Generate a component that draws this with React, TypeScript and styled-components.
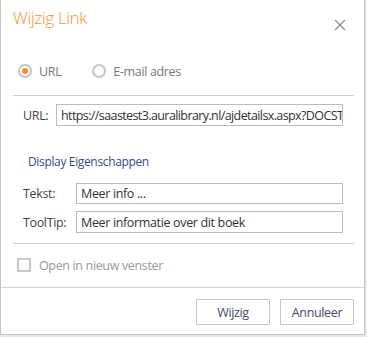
import styled, { createGlobalStyle } from 'styled-components';

const GlobalStyle = createGlobalStyle`
  html, body {
    margin: 0;
    padding: 0;
    background: #e8e8e8;
  }
  * {
    box-sizing: border-box;
  }
`;

const Dialog = styled.div`
  width: 365px;
  height: 335px;
  background: #fff;
  border: 1px solid #c4c4c4;
  border-top: none;
  display: flex;
  flex-direction: column;
  font-family: 'Open Sans', 'Noto Sans', sans-serif;
  font-size: 12px;
  letter-spacing: -0.35px;
  color: #444;
`;

const Header = styled.div`
  height: 56px;
  display: flex;
  justify-content: space-between;
  align-items: flex-start;
`;

const Title = styled.h1`
  margin: 7px 0 0 12px;
  font-size: 16.5px;
  font-weight: 300;
  line-height: 22px;
  letter-spacing: -0.2px;
  color: #f7901e;
`;

const Close = styled.button`
  margin: 19px 18px 0 0;
  padding: 0;
  width: 12px;
  height: 12px;
  border: none;
  background: transparent;
  display: flex;
`;

const Body = styled.div`
  padding: 0 10px 0 12px;
  display: flex;
  flex-direction: column;
`;

const RadioRow = styled.div`
  height: 30px;
  display: flex;
  align-items: center;
  padding-left: 5px;
  gap: 31px;
`;

const RadioLabel = styled.label`
  display: flex;
  align-items: center;
  gap: 7px;
  color: #777;
  font-size: 12.5px;
`;

const RadioDot = styled.span<{ $checked?: boolean }>`
  width: 14px;
  height: 14px;
  border-radius: 50%;
  border: 2px solid #c6c6c6;
  display: flex;
  align-items: center;
  justify-content: center;
  &::after {
    content: '';
    width: 6px;
    height: 6px;
    border-radius: 50%;
    background: ${(p) => (p.$checked ? '#f7901e' : 'transparent')};
  }
`;

const Divider = styled.div<{ $top: number }>`
  height: 1px;
  background: #cfcfcf;
  margin-top: ${(p) => p.$top}px;
`;

const FieldRow = styled.div<{ $top: number; $labelWidth: number; $height: number }>`
  display: flex;
  align-items: center;
  margin-top: ${(p) => p.$top}px;
  padding: 0 11px 0 10px;
  span {
    width: ${(p) => p.$labelWidth}px;
    flex: none;
    color: #444;
    font-size: 12.5px;
  }
  div {
    height: ${(p) => p.$height}px;
  }
`;

const Input = styled.div<{ $tight?: boolean }>`
  flex: 1;
  min-width: 0;
  border: 1px solid #bcbcbc;
  padding: 0 4px;
  display: flex;
  align-items: center;
  white-space: nowrap;
  overflow: hidden;
  color: #333;
  font-size: 12.5px;
  letter-spacing: ${(p) => (p.$tight ? '-0.6px' : 'inherit')};
`;

const Link = styled.a`
  margin: 28px 0 0 15px;
  line-height: 16px;
  color: #2f4f7f;
  font-size: 12px;
  text-decoration: none;
`;

const CheckRow = styled.label`
  height: 20px;
  margin-top: 11px;
  padding-left: 4px;
  display: flex;
  align-items: center;
  gap: 8px;
  color: #9a9a9a;
  font-size: 12.5px;
`;

const CheckBox = styled.span`
  width: 14px;
  height: 14px;
  border: 2px solid #c8c8c8;
`;

const Footer = styled.div`
  margin-top: 12px;
  border-top: 1px solid #d4d4d4;
  padding: 11px 10px 0 0;
  display: flex;
  justify-content: flex-end;
  gap: 10px;
`;

const Button = styled.button`
  width: 74px;
  height: 26px;
  background: #fff;
  border: 1px solid #c6c6c6;
  color: #3e4a6a;
  font-family: inherit;
  font-size: 12.5px;
  letter-spacing: inherit;
  padding: 0;
`;

export default function App() {
  return (
    <>
      <GlobalStyle />
      <Dialog>
        <Header>
          <Title>Wijzig Link</Title>
          <Close aria-label="Sluiten">
            <svg width="12" height="12" viewBox="0 0 12 12">
              <path d="M1 1 L11 11 M11 1 L1 11" stroke="#8a8a8a" strokeWidth="1.2" />
            </svg>
          </Close>
        </Header>
        <Body>
          <RadioRow>
            <RadioLabel>
              <RadioDot $checked />
              URL
            </RadioLabel>
            <RadioLabel>
              <RadioDot />
              E-mail adres
            </RadioLabel>
          </RadioRow>
          <Divider $top={9} />
          <FieldRow $top={8} $labelWidth={33} $height={22}>
            <span>URL:</span>
            <Input $tight>https://saastest3.auralibrary.nl/ajdetailsx.aspx?DOCST</Input>
          </FieldRow>
          <Link href="#">Display Eigenschappen</Link>
          <FieldRow $top={13} $labelWidth={53} $height={21}>
            <span>Tekst:</span>
            <Input>Meer info ...</Input>
          </FieldRow>
          <FieldRow $top={7} $labelWidth={53} $height={22}>
            <span>ToolTip:</span>
            <Input>Meer informatie over dit boek</Input>
          </FieldRow>
          <Divider $top={10} />
          <CheckRow>
            <CheckBox />
            Open in nieuw venster
          </CheckRow>
        </Body>
        <Footer>
          <Button>Wijzig</Button>
          <Button>Annuleer</Button>
        </Footer>
      </Dialog>
    </>
  );
}
